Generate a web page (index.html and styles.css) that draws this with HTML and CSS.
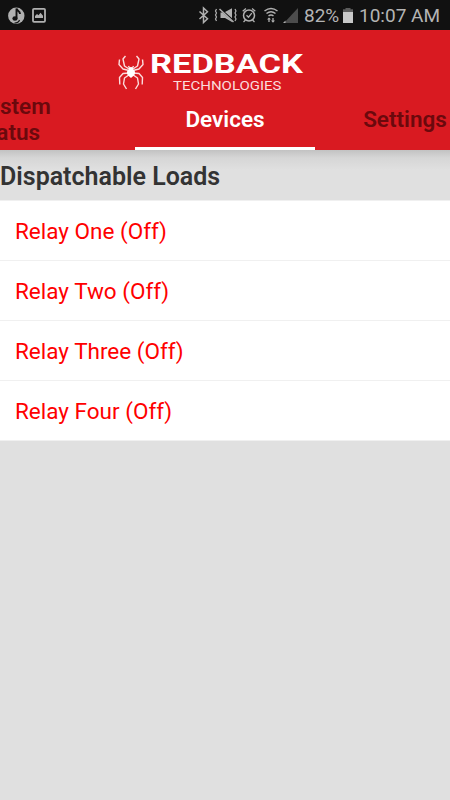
FILE: index.html
```
<!DOCTYPE html>
<html lang="en">
<head>
    <meta charset="UTF-8">
    <meta name="viewport" content="width=device-width, initial-scale=1.0">
    <title>Redback Technologies</title>
    <link rel="stylesheet" href="styles.css">
</head>
<body>
<div class="status-bar">
    <svg class="status-left" width="60" height="30" viewBox="0 0 60 30">
        <circle cx="16.3" cy="15.7" r="8.2" fill="#b0b0b0"/>
        <path d="M16.500 18.500V8.500c.5 2.500 3.500 2 3.500 5.500" fill="none" stroke="#111" stroke-width="1.900"/>
        <ellipse cx="15" cy="18.500" rx="2.600" ry="2.200" fill="#111"/>
        <path d="M14.500 23q4 0 5-3" fill="none" stroke="#111" stroke-width="1.200"/>
        <rect x="33" y="8.800" width="12" height="13" rx="1" fill="none" stroke="#b0b0b0" stroke-width="1.800"/>
        <path d="M35 18v-2l2-2 1.500 1.200 2-2.400 2.500 3V18z" fill="#b0b0b0"/>
    </svg>
    <svg class="status-icons" width="106" height="30" viewBox="194 0 106 30">
        <g fill="none" stroke="#b0b0b0" stroke-width="1.5">
            <path d="M199.500 11.500l8 7.300-4 3.700V8l4 3.700-8 7.300"/>
            <path d="M216.500 9l-1 2 1 2-1 2 1 2-1 2 1 2M235 9l1 2-1 2 1 2-1 2 1 2-1 2" stroke-width="1.2"/>
            <path d="M219.500 9l14 13"/>
            <circle cx="249" cy="15.500" r="5.500"/>
            <path d="M246.500 15.200l2 2 3.300-4M242.700 11.200l3.200-2.700M255.300 11.200l-3.200-2.700M245.500 20l-2 2M252.500 20l2 2" stroke-width="1.3"/>
            <path d="M264.500 11q6.500-5 13 0M266.500 13.500q4.500-3.600 9 0M268.500 16q2.500-2 5 0"/>
            <path d="M269 22v-3.500M273 18v3.500" stroke-width="1.3"/>
        </g>
        <path d="M220.500 12.500h2l9.500 8.800V22l-7-4h-4.500zM225 12l7-3.800v10z" fill="#b0b0b0"/>
        <path d="M267 19.500l2-2 2 2zM271 20.500h4l-2 2.300z" fill="#b0b0b0"/>
        <path d="M298 8v15h-14z" fill="#4c4c4c"/>
        <path d="M285.500 20.500v2.500H283z" fill="#b0b0b0"/>
    </svg>
    <span class="battery-level">82%</span>
    <svg class="battery" width="10" height="15" viewBox="0 0 10 15">
        <path d="M2.500 0h5v1.300H10V15H0V1.300h2.500z" fill="#5c5c5c"/>
        <path d="M0 4h10v11H0z" fill="#c8c8c8"/>
    </svg>
    <span class="clock">10:07 AM</span>
</div>

<div class="header">
    <svg class="logo" width="190" height="45" viewBox="115 50 190 45">
        <g fill="none" stroke="#fbdcdd" stroke-width="1.4" stroke-linejoin="round">
            <path d="M129 69l-4.500-3-1.500-7 2.500-3M129 70.500l-6-1.500-4-4.500.5-5M129 73l-6 .5-3.500 4 .3 7M129.500 74.500l-5 3.500-1 6 3 5"/>
            <path d="M133 69l4.500-3 1.500-7-2.500-3M133 70.500l6-1.500 4-4.500-.5-5M133 73l6 .5 3.500 4-.3 7M132.500 74.500l5 3.500 1 6-3 5"/>
            <path d="M129.500 68l-1-2M132.500 68l1-2"/>
        </g>
        <path d="M131 67c2 0 2.400 1.500 2 2.600 2.300.9 2.600 3.400 1.400 5.400L131 78l-3.400-3c-1.200-2-.9-4.500 1.400-5.400-.4-1.100 0-2.600 2-2.600z" fill="#fff"/>
        <text class="logo-name" x="150" y="72.700" textLength="153" lengthAdjust="spacingAndGlyphs">REDBACK</text>
        <text class="logo-sub" x="173" y="90" textLength="108.500" lengthAdjust="spacingAndGlyphs">TECHNOLOGIES</text>
    </svg>
    <div class="tabs">
        <div class="tab tab-wrap"><span>System<br>Status</span></div>
        <div class="tab active">Devices</div>
        <div class="tab">Settings</div>
    </div>
</div>

<div class="content">
    <h2>Dispatchable Loads</h2>
    <ul class="loads">
        <li>Relay One (Off)</li>
        <li>Relay Two (Off)</li>
        <li>Relay Three (Off)</li>
        <li>Relay Four (Off)</li>
    </ul>
</div>
</body>
</html>
```

FILE: styles.css
```
body {
    margin: 0;
    height: 100vh;
    overflow: hidden;
    background-color: #e0e0e0;
    font-family: Roboto, sans-serif;
}

.status-bar {
    display: flex;
    align-items: center;
    height: 30px;
    background-color: #111;
    color: #b4b4b4;
    font-size: 19px;
    white-space: nowrap;
}

.status-icons {
    margin-left: 134px;
}

.battery-level {
    width: 36px;
    margin-left: 4px;
}

.battery {
    margin: 1px 6px 0 3px;
}

.header {
    height: 120px;
    overflow: hidden;
    background-color: #d91a21;
}

.logo {
    display: block;
    margin: 20px 0 0 115px;
}

.logo-name {
    font-size: 25px;
    font-weight: bold;
    fill: #fff;
}

.logo-sub {
    font-size: 13px;
    font-weight: 400;
    fill: #fbdcdd;
}

.tabs {
    display: flex;
    width: 540px;
    height: 55px;
    margin-left: -45px;
}

.tab {
    display: flex;
    align-items: center;
    justify-content: center;
    width: 180px;
    box-sizing: border-box;
    padding-bottom: 5px;
    border-bottom: 3px solid transparent;
    color: #6b090d;
    font-size: 22.5px;
    font-weight: 600;
    line-height: 26px;
}

.tab-wrap {
    justify-content: flex-start;
    padding-left: 20px;
}

.tab.active {
    color: #fff;
    border-bottom-color: #fff;
}

.content h2 {
    margin: 0;
    height: 50px;
    background: linear-gradient(#c2c2c2, #d6d6d6 8px, #e0e0e0 20px);
    color: #333;
    font-size: 25px;
    font-weight: 600;
    line-height: 53px;
}

.loads {
    margin: 0;
    padding: 0;
    list-style: none;
    background-color: #fff;
    border-top: 1px solid #f0f0f0;
}

.loads li {
    height: 60px;
    padding-left: 15px;
    box-sizing: border-box;
    border-bottom: 1px solid #f0f0f0;
    color: #f00;
    font-size: 22.5px;
    line-height: 61px;
}
```
